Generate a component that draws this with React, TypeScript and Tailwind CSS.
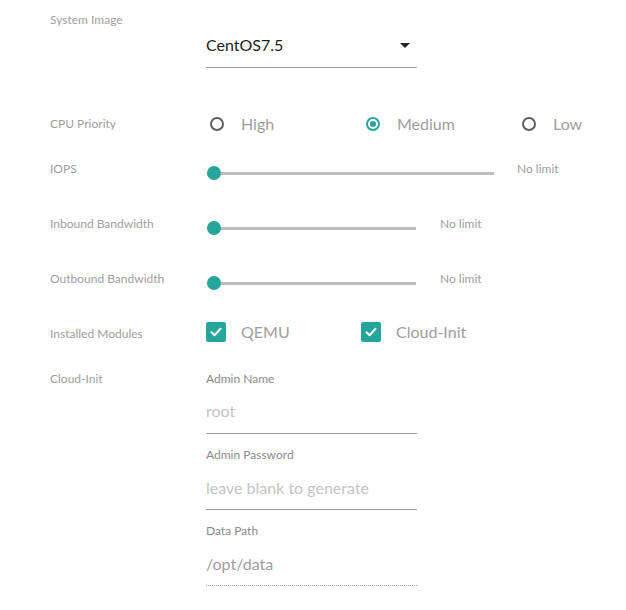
import { useState } from 'react';

const teal = '#26a69a';

function Radio({ label, checked, last, onClick }: { label: string; checked: boolean; last?: boolean; onClick: () => void }) {
  return (
    <div className={last ? 'flex shrink-0 cursor-pointer items-center' : 'flex w-[156px] shrink-0 cursor-pointer items-center'} onClick={onClick}>
      <span
        className={
          checked
            ? 'ml-1 flex h-[14px] w-[14px] shrink-0 items-center justify-center rounded-full border-2 border-[#26a69a]'
            : 'ml-1 flex h-[14px] w-[14px] shrink-0 items-center justify-center rounded-full border-2 border-[#5f5f5f]'
        }
      >
        {checked && <span className="h-[6px] w-[6px] rounded-full bg-[#26a69a]" />}
      </span>
      <span className="ml-[17px] text-base text-[#9e9e9e]">{label}</span>
    </div>
  );
}

function Check({ label }: { label: string }) {
  return (
    <div className="flex w-[155px] shrink-0 items-center">
      <span className="flex h-[20px] w-[20px] shrink-0 items-center justify-center rounded-[2px] bg-[#26a69a]">
        <svg width="14" height="14" viewBox="0 0 14 14" fill="none">
          <path d="M2.5 7.2 L5.6 10.2 L11.5 3.8" stroke="#fff" strokeWidth="2" strokeLinecap="round" strokeLinejoin="round" />
        </svg>
      </span>
      <span className="ml-[15px] text-base text-[#9e9e9e]">{label}</span>
    </div>
  );
}

function Slider({ width, labelGap }: { width: number; labelGap: number }) {
  return (
    <div className="flex h-[48px] items-center">
      <div className="relative flex h-[14px] shrink-0 items-center" style={{ width }}>
        <div className="ml-[1px] h-[3px] w-full bg-[#bdbdbd]" />
        <span className="absolute left-[1px] top-0 h-[14px] w-[14px] rounded-full" style={{ background: teal }} />
      </div>
      <span className="-mt-[8px] shrink-0 text-xs text-[#9e9e9e]" style={{ marginLeft: labelGap }}>
        No limit
      </span>
    </div>
  );
}

function Row({ label, h, children }: { label: string; h: string; children: React.ReactNode }) {
  return (
    <div className={`flex items-start ${h}`}>
      <div className="w-[156px] shrink-0 pt-[12px] text-xs leading-[16px] text-[#9e9e9e]">{label}</div>
      {children}
    </div>
  );
}

export default function App() {
  const [priority, setPriority] = useState('Medium');
  const options = ['High', 'Medium', 'Low'];

  return (
    <div className="min-h-[610px] w-[626px] bg-white pl-[50px]" style={{ fontFamily: 'Lato, "Noto Sans", sans-serif' }}>
      {/* System image */}
      <div className="flex h-[104px] items-start">
        <div className="w-[156px] shrink-0 pt-[12px] text-xs leading-[16px] text-[#9e9e9e]">System Image</div>
        <div className="mt-[28px] flex h-[40px] w-[211px] items-center justify-between border-b border-[#9e9e9e] pb-[5px] pr-[7px]">
          <span className="text-base text-[#212121]">CentOS7.5</span>
          <svg width="10" height="5" viewBox="0 0 10 5">
            <path d="M0 0 H10 L5 5 Z" fill="#212121" />
          </svg>
        </div>
      </div>

      <Row label="CPU Priority" h="h-[45px]">
        <div className="flex h-[40px] items-center">
          {options.map((p, i) => (
            <Radio key={p} label={p} last={i === options.length - 1} checked={priority === p} onClick={() => setPriority(p)} />
          ))}
        </div>
      </Row>

      <Row label="IOPS" h="h-[55px]">
        <Slider width={288} labelGap={23} />
      </Row>
      <Row label="Inbound Bandwidth" h="h-[55px]">
        <Slider width={210} labelGap={24} />
      </Row>
      <Row label="Outbound Bandwidth" h="h-[55px]">
        <Slider width={210} labelGap={24} />
      </Row>

      <Row label="Installed Modules" h="h-[45px]">
        <div className="flex h-[36px] items-center">
          <Check label="QEMU" />
          <Check label="Cloud-Init" />
        </div>
      </Row>

      <div className="flex items-start">
        <div className="w-[156px] shrink-0 pt-[12px] text-xs leading-[16px] text-[#9e9e9e]">Cloud-Init</div>
        <div className="w-[211px] pt-[12px]">
          <div className="text-xs leading-[16px] text-[#8a8a8a]">Admin Name</div>
          <div className="flex h-[47px] items-center border-b border-[#9e9e9e] pt-[2px]">
            <span className="text-base text-[#c4c4c4]">root</span>
          </div>
          <div className="mt-[13px] text-xs leading-[16px] text-[#8a8a8a]">Admin Password</div>
          <div className="flex h-[47px] items-center border-b border-[#9e9e9e] pt-[4px]">
            <span className="text-base text-[#c4c4c4]">leave blank to generate</span>
          </div>
          <div className="mt-[13px] text-xs leading-[16px] text-[#8a8a8a]">Data Path</div>
          <div className="flex h-[47px] items-center border-b border-dotted border-[#9e9e9e] pt-[4px]">
            <span className="text-base text-[#9e9e9e]">/opt/data</span>
          </div>
        </div>
      </div>
    </div>
  );
}
